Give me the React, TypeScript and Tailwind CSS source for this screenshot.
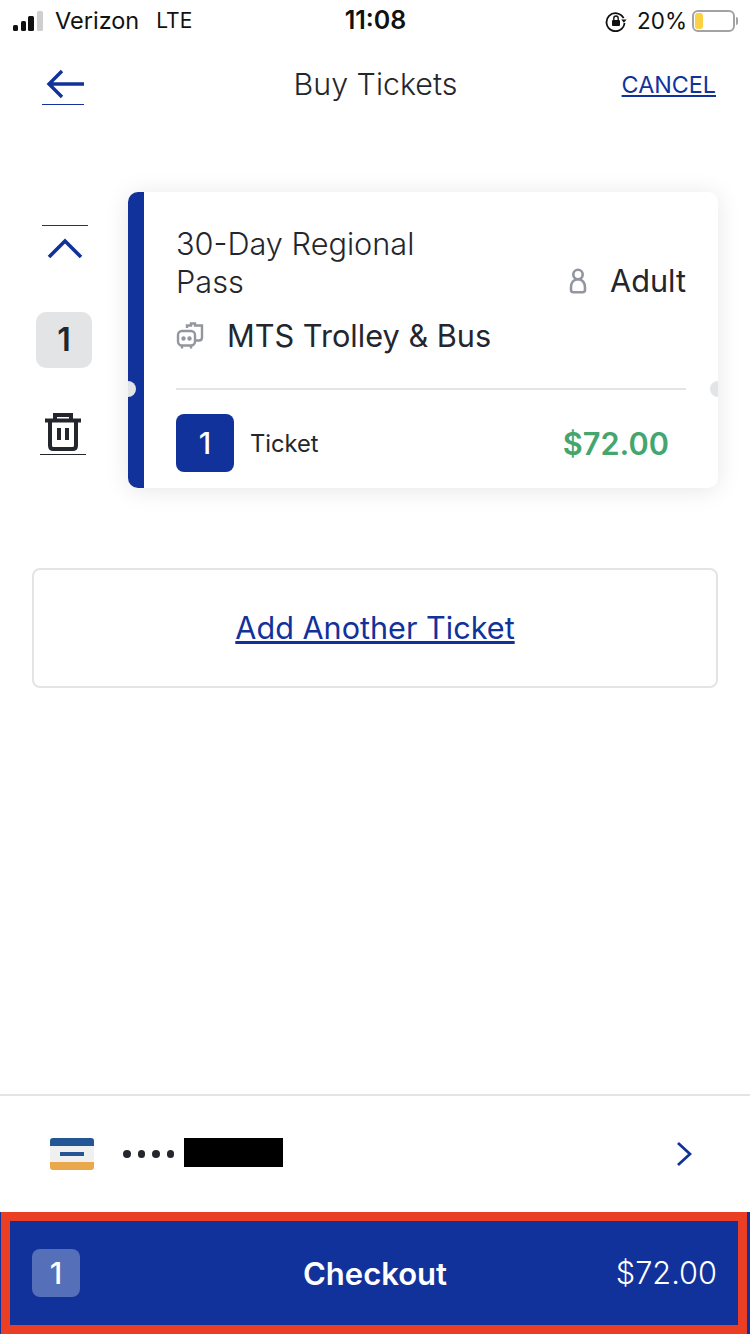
const BLUE = "#12329b";

function SignalBars() {
  return (
    <div className="flex items-end gap-[2.5px] w-[33px] h-[20px]">
      <div className="w-[5px] h-[6px] rounded-[1.5px] bg-[#111]" />
      <div className="w-[5px] h-[10px] rounded-[1.5px] bg-[#111]" />
      <div className="w-[6px] h-[15px] rounded-[1.5px] bg-[#111]" />
      <div className="w-[6px] h-[20px] rounded-[1.5px] bg-[#cfcfcf]" />
    </div>
  );
}

function RotationLock() {
  return (
    <svg width="22" height="22" viewBox="0 0 22 22" fill="none">
      <path d="M18.6 8.2A9 9 0 1 0 19.5 13" stroke="#111" strokeWidth="1.8" />
      <path d="M16.2 9.4h5.4l-2.7 3.4z" fill="#111" />
      <rect x="7" y="10" width="8" height="6" rx="1" fill="#111" />
      <path d="M8.8 10V8.2a2.2 2.2 0 0 1 4.4 0V10" stroke="#111" strokeWidth="1.4" />
    </svg>
  );
}

function StatusBar() {
  return (
    <div className="grid grid-cols-3 items-center h-[42px] pl-[13px] pr-[12px] text-[#111] text-[23.5px]">
      <div className="flex items-center">
        <SignalBars />
        <span className="ml-[9px]">Verizon</span>
        <span className="ml-[17px] text-[21px]">LTE</span>
      </div>
      <div className="text-center font-semibold text-[25px]">11:08</div>
      <div className="flex items-center justify-end">
        <RotationLock />
        <span className="ml-[10px] text-[22.5px]">20%</span>
        <div className="ml-[5px] w-[43px] h-[22px] rounded-[6px] border-2 border-[#a3a3a3] p-[1px]">
          <div className="w-[8px] h-full rounded-[3px] bg-[#fbd043]" />
        </div>
        <div className="ml-[1px] w-[2px] h-[8px] rounded-r-[2px] bg-[#a3a3a3]" />
      </div>
    </div>
  );
}

function BusIcon() {
  return (
    <svg width="28" height="28" viewBox="0 0 28 28" fill="none" stroke="#93959f" strokeWidth="2.4">
      <path d="M11 6V3.500h4V1.500h4v2h7v12q0 3-3 3h-3" />
      <rect x="2" y="9" width="17" height="14.500" rx="4" fill="#fff" />
      <circle cx="7.500" cy="16.500" r="1" fill="#93959f" />
      <circle cx="13.500" cy="16.500" r="1" fill="#93959f" />
      <path d="M6 23.500v3M15 23.500v3" />
    </svg>
  );
}

function PersonIcon() {
  return (
    <svg width="18" height="26" viewBox="0 0 18 26" fill="none" stroke="#93959f" strokeWidth="2.6">
      <circle cx="9" cy="6.500" r="4.700" />
      <path d="M9 11.200c-4.500 0-7 3.500-7 8.500v2q0 2.500 2.500 2.500h9q2.500 0 2.500-2.500v-2c0-5-2.500-8.500-7-8.500z" />
    </svg>
  );
}

function TrashIcon() {
  return (
    <svg width="38" height="38" viewBox="0 0 38 38" fill="none" stroke="#24262e" strokeWidth="4">
      <path d="M1 7.500h36" />
      <path d="M11 7.500V2h16v5.500" />
      <path d="M6 7.500v25q0 3.500 3.500 3.500h19q3.500 0 3.500-3.500v-25" />
      <path d="M15 15v12M23 15v12" />
    </svg>
  );
}

function Stepper() {
  return (
    <div className="w-[96px] shrink-0 pl-[4px] flex flex-col items-start">
      <div className="ml-[6px] w-[46px] border-t border-[#12329b] mt-[33px] flex justify-center pt-[12px]">
        <svg width="36" height="20" viewBox="0 0 36 20" fill="none" stroke={BLUE} strokeWidth="3.600">
          <path d="M2 19L18 3l16 16" />
        </svg>
      </div>
      <div className="mt-[54px] w-[56px] h-[56px] rounded-[10px] bg-[#e3e4e6] flex items-center justify-center text-[32px] font-semibold text-[#24262e]">
        1
      </div>
      <div className="mt-[45px] ml-[4px] w-[46px] flex flex-col items-center border-b border-[#24262e] pb-[3px]">
        <TrashIcon />
      </div>
    </div>
  );
}

function TicketCard() {
  return (
    <div className="relative flex flex-1 h-[296px] rounded-[10px] bg-white overflow-hidden shadow-[0_2px_24px_rgba(0,0,0,0.1)]">
      <div className="w-[16px] shrink-0 bg-[#12329b]" />
      <div className="flex-1 pl-[32px] pr-[32px]">
        <div className="flex items-center justify-between pt-[33px]">
          <div className="text-[30.7px] leading-[38px] font-light text-[#24262e] w-[280px]">30-Day Regional Pass</div>
          <div className="flex items-center mt-[36px]">
            <PersonIcon />
            <span className="ml-[23px] text-[30.7px] leading-[38px] text-[#24262e]">Adult</span>
          </div>
        </div>
        <div className="flex items-center mt-[16px] text-[30.7px] leading-[38px] text-[#24262e]">
          <BusIcon />
          <span className="ml-[23px]">MTS Trolley &amp; Bus</span>
        </div>
        <div className="h-[2px] bg-[#e3e4e6] mt-[33px]" />
        <div className="flex items-center mt-[24px]">
          <div className="w-[58px] h-[58px] rounded-[8px] bg-[#12329b] flex items-center justify-center text-white text-[30px] font-medium">1</div>
          <span className="ml-[16px] mt-[2px] text-[23.7px] text-[#24262e]">Ticket</span>
          <span className="ml-auto mr-[17px] mt-[2px] text-[30.7px] font-semibold text-[#45a56f]">$72.00</span>
        </div>
      </div>
      <div className="absolute left-[-8px] top-[189px] w-[16px] h-[16px] rounded-full bg-[#e3e4e6]" />
      <div className="absolute right-[-8px] top-[189px] w-[16px] h-[16px] rounded-full bg-[#e3e4e6]" />
    </div>
  );
}

export default function App() {
  return (
    <div
      className="relative w-[750px] h-[1334px] bg-white flex flex-col overflow-hidden"
      style={{ fontFamily: "Inter, sans-serif" }}
    >
      <StatusBar />

      {/* Nav */}
      <div className="grid grid-cols-3 items-center h-[86px] pl-[42px] pr-[34px]">
        <div className="w-[42px] border-b border-[#12329b] pb-[5px] pl-[4px] mt-[3px]">
          <svg width="38" height="30" viewBox="0 0 38 30" fill="none" stroke={BLUE} strokeWidth="3.400">
            <path d="M38 15H3M16 2L3 15l13 13" />
          </svg>
        </div>
        <h1 className="text-[30.4px] font-light text-[#24262e] text-center whitespace-nowrap pr-[7px]">Buy Tickets</h1>
        <a className="text-right text-[23.3px] text-[#12329b] underline">CANCEL</a>
      </div>

      {/* Ticket */}
      <div className="flex pl-[32px] pr-[32px] mt-[64px]">
        <Stepper />
        <TicketCard />
      </div>

      <button className="mt-[80px] mx-[32px] h-[120px] rounded-[8px] border-2 border-[#e3e4e6] text-[30.6px] text-[#12329b] underline">
        Add Another Ticket
      </button>

      {/* Footer */}
      <div className="mt-auto border-t-2 border-[#e3e4e6] h-[118px] flex items-center pl-[50px] pr-[58px]">
        <div className="w-[44px] h-[32px] rounded-[3px] overflow-hidden flex flex-col bg-[#f0f0f0]">
          <div className="h-[8px] bg-[#245595]" />
          <div className="flex-1 flex items-center justify-center">
            <div className="w-[24px] h-[4px] bg-[#245595]" />
          </div>
          <div className="h-[8px] bg-[#e9a84b]" />
        </div>
        <div className="ml-[29px] flex gap-[7px]">
          <div className="w-[7.500px] h-[7.500px] rounded-full bg-[#24262e]" />
          <div className="w-[7.500px] h-[7.500px] rounded-full bg-[#24262e]" />
          <div className="w-[7.500px] h-[7.500px] rounded-full bg-[#24262e]" />
          <div className="w-[7.500px] h-[7.500px] rounded-full bg-[#24262e]" />
        </div>
        <div className="ml-[10px] mb-[4px] w-[99px] h-[29px] bg-black" />
        <svg className="ml-auto" width="16" height="26" viewBox="0 0 16 26" fill="none" stroke={BLUE} strokeWidth="2.800">
          <path d="M2 2l12 11L2 24" />
        </svg>
      </div>

      <div className="h-[122px] bg-[#12329b] pr-[3px]">
        <div className="h-full ml-[1px] border-[9px] border-[#ea3f25] flex items-center pl-[22px] pr-[21px] text-white relative">
          <div className="w-[48px] h-[48px] rounded-[8px] bg-[#5570b8] flex items-center justify-center text-[30px] font-medium">1</div>
          <span className="absolute left-[2px] right-0 mt-[3px] text-center text-[31px] font-semibold">Checkout</span>
          <span className="ml-auto mt-[1px] text-[30.700px] font-light">$72.00</span>
        </div>
      </div>
    </div>
  );
}
